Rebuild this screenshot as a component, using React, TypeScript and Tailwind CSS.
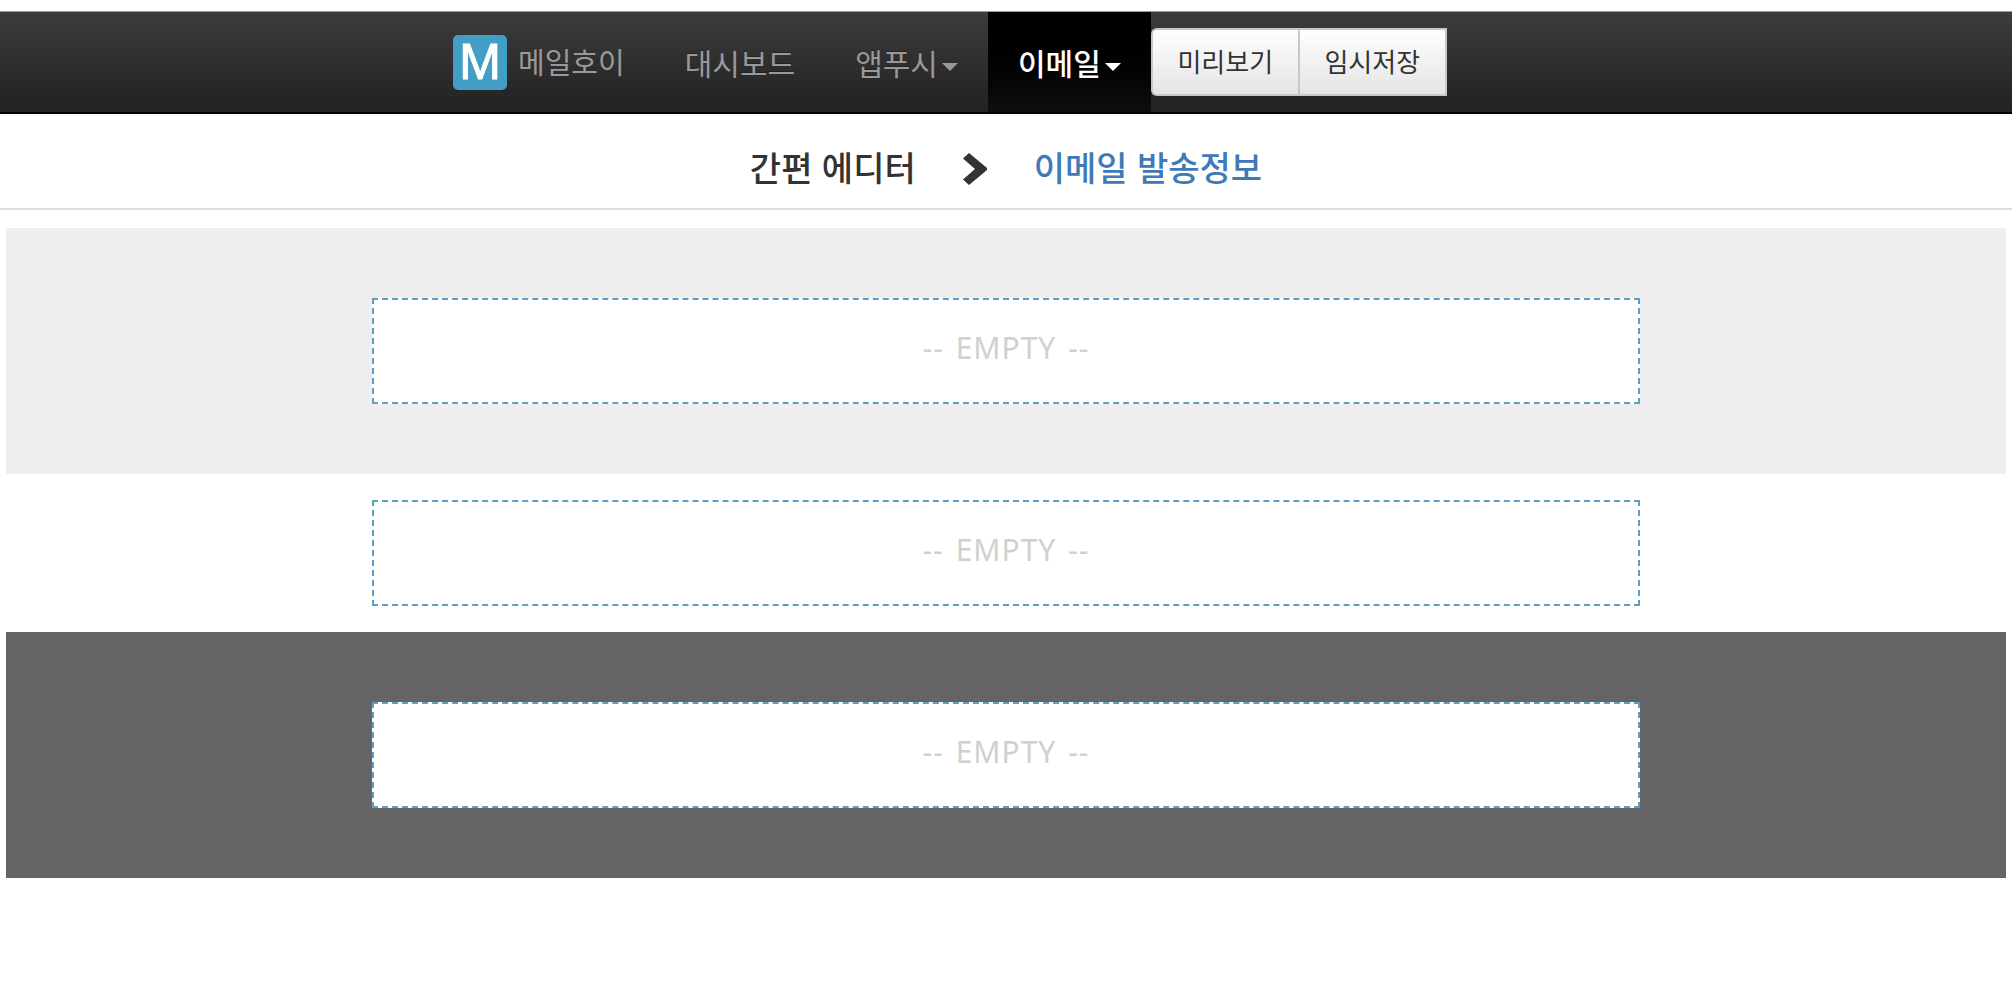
const FONT = 'font-["Liberation_Sans","Noto_Sans_CJK_KR",sans-serif]'

function Caret({ color }: { color: string }) {
  return <span className={`ml-[4px] mt-[4px] inline-block h-0 w-0 border-x-[8px] border-t-[8px] border-x-transparent ${color}`} />
}

function NavItem({ label, caret }: { label: string; caret?: boolean }) {
  return (
    <a className="flex h-full items-center px-[30px] pt-[5px] text-[30px] text-[#999999] [text-shadow:0_-1px_0_rgba(0,0,0,0.25)]">
      {label}
      {caret && <Caret color="border-t-[#999999]" />}
    </a>
  )
}

function EmptyBox() {
  return (
    <div className="mx-auto flex h-[106px] w-[1268px] items-center justify-center border-2 border-dashed border-[#5ba0c0] bg-white pb-[8px]">
      <span className='font-["Noto_Sans",sans-serif] text-[30px] tracking-[1px] [word-spacing:3px] text-[#d0d0d0]'>-- EMPTY --</span>
    </div>
  )
}

export default function App() {
  return (
    <div className={`${FONT} min-h-[984px] bg-white pt-[11px]`}>
      {/* 상단 네비게이션 */}
      <nav className="flex h-[103px] justify-center border-t border-b-2 border-t-[#999999] border-b-black bg-gradient-to-b from-[#3c3c3c] to-[#222222]">
        <div className="flex h-full w-[1560px] items-center pl-[227px]">
          <div className="flex h-full items-center pr-[30px]">
            <span className="flex h-[55px] w-[54px] items-center justify-center rounded-[5px] bg-[#429ec5] text-[50px] text-white [-webkit-text-stroke:1px_white]">M</span>
            <span className="ml-[11px] pt-[5px] text-[29px] text-[#999999]">메일호이</span>
          </div>
          <NavItem label="대시보드" />
          <NavItem label="앱푸시" caret />
          <a className="flex h-full items-center bg-gradient-to-b from-[#000000] to-[#0f0f0f] px-[30px] pt-[5px] text-[30px] font-medium text-white">
            이메일
            <Caret color="border-t-white" />
          </a>
          <div className="flex h-[68px] text-[26px] text-[#333333]">
            <button className="h-full w-[147px] rounded-l-[6px] border-2 border-r-0 border-[#c8c8c8] bg-gradient-to-b from-white to-[#e4e4e4] pt-[2px]">미리보기</button>
            <button className="h-full w-[149px] border-2 border-[#c8c8c8] bg-gradient-to-b from-white to-[#e4e4e4] pt-[2px]">임시저장</button>
          </div>
        </div>
      </nav>

      {/* 단계 표시 */}
      <div className="flex h-[96px] items-center justify-center border-b-2 border-[#dddddd] pt-[16px] text-[34px]">
        <span className="font-medium text-[#333333]">간편 에디터</span>
        <svg viewBox="0 0 24 32" className="mx-[47px] h-[32px] w-[24px]">
          <polygon points="6,0 24,15 24,17 6,32 0,26.5 12,16 0,5.5" fill="#333333" />
        </svg>
        <span className="font-medium text-[#4079b5]">이메일 발송정보</span>
      </div>

      {/* 편집 영역 */}
      <div className="px-[6px] pt-[18px]">
        <section className="flex h-[246px] items-center bg-[#eeeeee]">
          <EmptyBox />
        </section>
        <div className="flex h-[158px] items-center">
          <EmptyBox />
        </div>
        <section className="flex h-[246px] items-center bg-[#646464]">
          <EmptyBox />
        </section>
      </div>
    </div>
  )
}
